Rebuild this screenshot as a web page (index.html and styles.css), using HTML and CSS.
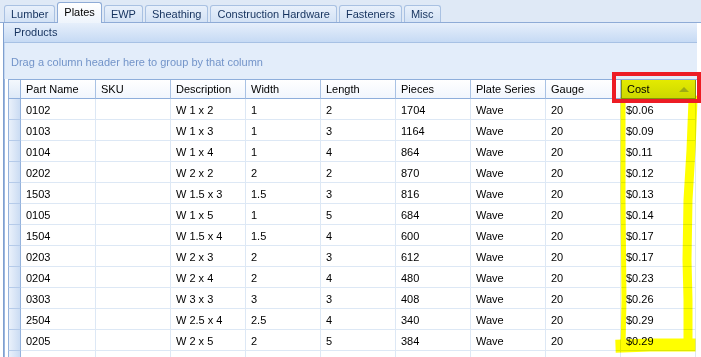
FILE: index.html
```html
<!DOCTYPE html>
<html lang="en">
<head>
    <meta charset="UTF-8">
    <title>Products</title>
    <link rel="stylesheet" href="styles.css">
</head>
<body>
    <nav class="tabs">
        <a class="tab">Lumber</a>
        <a class="tab active">Plates</a>
        <a class="tab">EWP</a>
        <a class="tab">Sheathing</a>
        <a class="tab">Construction Hardware</a>
        <a class="tab">Fasteners</a>
        <a class="tab">Misc</a>
    </nav>
    <section class="panel">
        <div class="panel-title">Products</div>
        <div class="group-area">Drag a column header here to group by that column</div>
        <div class="grid" id="grid">
            <div class="row head">
                <div class="ind"></div>
                <div class="cell">Part Name</div>
                <div class="cell">SKU</div>
                <div class="cell">Description</div>
                <div class="cell">Width</div>
                <div class="cell">Length</div>
                <div class="cell">Pieces</div>
                <div class="cell">Plate Series</div>
                <div class="cell">Gauge</div>
                <div class="cell sorted">Cost<span class="sort-arrow"></span></div>
            </div>
        </div>
    </section>

    <!-- paint markup over the screenshot -->
    <svg class="markup" width="701" height="357" viewBox="0 0 701 357">
        <path d="M623 100 L623 200 L624 300 L623 348" />
        <path d="M622 346 L650 345 L672 345 L689 345" class="wide" />
        <path d="M693 100 L691 150 L688 200 L687 260 L688 300 L688 344" class="thick" />
    </svg>
    <div class="red-box"></div>

    <script>
        const plates = [
            ['0102', '', 'W 1 x 2', '1', '2', '1704', 'Wave', '20', '$0.06'],
            ['0103', '', 'W 1 x 3', '1', '3', '1164', 'Wave', '20', '$0.09'],
            ['0104', '', 'W 1 x 4', '1', '4', '864', 'Wave', '20', '$0.11'],
            ['0202', '', 'W 2 x 2', '2', '2', '870', 'Wave', '20', '$0.12'],
            ['1503', '', 'W 1.5 x 3', '1.5', '3', '816', 'Wave', '20', '$0.13'],
            ['0105', '', 'W 1 x 5', '1', '5', '684', 'Wave', '20', '$0.14'],
            ['1504', '', 'W 1.5 x 4', '1.5', '4', '600', 'Wave', '20', '$0.17'],
            ['0203', '', 'W 2 x 3', '2', '3', '612', 'Wave', '20', '$0.17'],
            ['0204', '', 'W 2 x 4', '2', '4', '480', 'Wave', '20', '$0.23'],
            ['0303', '', 'W 3 x 3', '3', '3', '408', 'Wave', '20', '$0.26'],
            ['2504', '', 'W 2.5 x 4', '2.5', '4', '340', 'Wave', '20', '$0.29'],
            ['0205', '', 'W 2 x 5', '2', '5', '384', 'Wave', '20', '$0.29'],
            ['', '', '', '', '', '', '', '', '']
        ];

        const grid = document.getElementById('grid');
        plates.forEach(function (plate) {
            const row = document.createElement('div');
            row.className = 'row';

            const ind = document.createElement('div');
            ind.className = 'ind';
            row.appendChild(ind);

            plate.forEach(function (value) {
                const cell = document.createElement('div');
                cell.className = 'cell';
                cell.innerText = value;
                row.appendChild(cell);
            });
            grid.appendChild(row);
        });
    </script>
</body>
</html>
```

FILE: styles.css
```css
body {
    margin: 0;
    width: 701px;
    height: 357px;
    overflow: hidden;
    position: relative;
    background: #fff;
    font-family: "Liberation Sans", Arial, sans-serif;
    font-size: 11px;
    color: #000;
}

/* Tab strip */
.tabs {
    height: 22px;
    display: flex;
    align-items: flex-end;
    gap: 2px;
    padding-left: 4px;
    background: #dfe9f6;
    border-bottom: 1px solid #8eabd6;
}
.tab {
    height: 16px;
    line-height: 16px;
    padding: 0 6px;
    color: #15325e;
    border: 1px solid #a9c1e2;
    border-bottom: none;
    border-radius: 3px 3px 0 0;
    background: linear-gradient(#e8f0fb, #d3e2f5);
}
.tab.active {
    height: 20px;
    line-height: 18px;
    margin-bottom: -1px;
    color: #000;
    border-color: #8eabd6;
    background: linear-gradient(#ffffff, #eef4fc);
}

/* Products panel */
.panel {
    margin-left: 3px;
    width: 693px;
    border-left: 1px solid #7f9fcf;
}
.panel-title {
    height: 19px;
    line-height: 19px;
    padding-left: 10px;
    color: #15325e;
    background: linear-gradient(#e6effb, #c6daf4);
    border-bottom: 1px solid #a7c1e4;
}
.group-area {
    height: 36px;
    line-height: 38px;
    padding-left: 6px;
    color: #7394c9;
    background: #e3edfa;
    border-left: 1px solid #c4d7f0;
}

/* Grid */
.grid {
    padding-left: 3px;
    border-left: 1px solid #9bb7df;
    background: #fff;
}
.row {
    display: flex;
    height: 21px;
}
.row .ind {
    width: 13px;
    box-sizing: border-box;
    border-left: 1px solid #94b2dc;
    border-right: 1px solid #94b2dc;
    border-bottom: 1px solid #b5cbea;
    background: linear-gradient(90deg, #eaf1fb, #cbdcf3);
}
.row .cell {
    width: 75px;
    box-sizing: border-box;
    padding: 1px 0 0 5px;
    line-height: 20px;
    white-space: nowrap;
    border-right: 1px solid #dde8f5;
    border-bottom: 1px solid #dde8f5;
}
.row.head {
    height: 20px;
    border-top: 1px solid #8eaedb;
    box-sizing: border-box;
}
.row.head .ind {
    background: linear-gradient(#f4f8fd, #dde9f8);
    border-bottom-color: #8eaedb;
}
.row.head .cell {
    padding-top: 0;
    line-height: 18px;
    border-right-color: #a9c2e4;
    border-bottom-color: #8eaedb;
    background: linear-gradient(#ffffff, #f1f6fd);
}
.row.head .cell.sorted {
    position: relative;
    background: linear-gradient(#e4ea00, #ccd800);
    border: 1px solid #86930c;
    border-top: none;
    line-height: 18px;
}
.sort-arrow {
    position: absolute;
    right: 6px;
    top: 7px;
    border-left: 5px solid transparent;
    border-right: 5px solid transparent;
    border-bottom: 5px solid #9eac12;
}

/* Paint markup */
.markup {
    position: absolute;
    top: 0;
    left: 0;
    pointer-events: none;
    mix-blend-mode: multiply;
}
.markup path {
    fill: none;
    stroke: #ffff00;
    stroke-width: 5;
    stroke-linejoin: round;
    stroke-linecap: square;
}
.markup path.thick {
    stroke-width: 9;
}
.markup path.wide {
    stroke-width: 13;
}
.red-box {
    position: absolute;
    left: 612px;
    top: 72px;
    width: 81px;
    height: 23px;
    border: 4px solid #ed1c24;
}
```
